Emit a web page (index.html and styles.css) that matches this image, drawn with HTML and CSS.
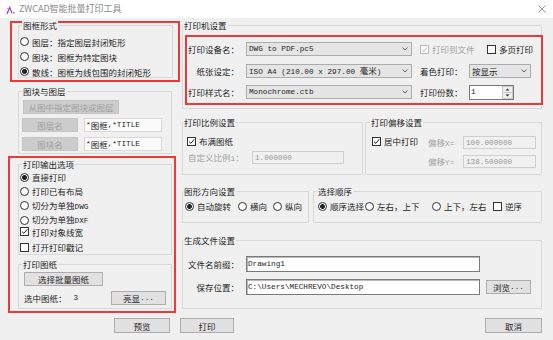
FILE: index.html
```html
<!DOCTYPE html>
<html lang="zh-CN">
<head>
<meta charset="utf-8">
<title>ZWCAD智能批量打印工具</title>
<link rel="stylesheet" href="styles.css">
</head>
<body>
<div class="titlebar">
  <svg class="logo" viewBox="0 0 10 10"><path d="M1 9 L4.2 1.5 L6.6 8" fill="none" stroke="#a33fc2" stroke-width="1.4"/><circle cx="8.6" cy="7.6" r="0.9" fill="#a33fc2"/><circle cx="2" cy="3" r="0.8" fill="#c07ad6"/></svg>
  <span class="title">ZWCAD智能批量打印工具</span>
  <svg class="close" viewBox="0 0 8 8"><path d="M0.5 0.5 L7.5 7.5 M7.5 0.5 L0.5 7.5" stroke="#8a8a8a" stroke-width="0.9"/></svg>
</div>

<div class="main">
  <div class="left">
    <div class="red red1">
      <div class="grp g1">
        <span class="lg">图框形式</span>
        <div class="opts3">
          <div class="it"><span class="rd"></span><span>图层：指定图层封闭矩形</span></div>
          <div class="it"><span class="rd"></span><span>图块：图框为特定图块</span></div>
          <div class="it"><span class="rd on"></span><span>散线：图框为线包围的封闭矩形</span></div>
        </div>
      </div>
    </div>

    <div class="grp g2">
      <span class="lg">图块与图层</span>
      <div class="btn dis b-pick">从图中指定图块或图层</div>
      <div class="nrow">
        <div class="btn dis b-name">图层名</div>
        <div class="tb tb-dis"><span class="m">*</span>图框<span class="m">,*TITLE</span></div>
      </div>
      <div class="nrow nrow2">
        <div class="btn dis b-name">图块名</div>
        <div class="tb tb-dis"><span class="m">*</span>图框<span class="m">,*TITLE</span></div>
      </div>
    </div>

    <div class="red red2">
      <div class="grp g3">
        <span class="lg">打印输出选项</span>
        <div class="opts6">
          <div class="it"><span class="rd on"></span><span>直接打印</span></div>
          <div class="it"><span class="rd"></span><span>打印已有布局</span></div>
          <div class="it"><span class="rd"></span><span>切分为单独<span class="m">DWG</span></span></div>
          <div class="it"><span class="rd"></span><span>切分为单独<span class="m">DXF</span></span></div>
          <div class="it"><span class="cb"><svg viewBox="0 0 7 7"><path d="M1 3.6 L2.9 5.4 L6.2 1.3" fill="none" stroke="#222" stroke-width="1"/></svg></span><span>打印对象线宽</span></div>
          <div class="it"><span class="cb"></span><span>打开打印戳记</span></div>
        </div>
      </div>
      <div class="grp g4">
        <span class="lg">打印图纸</span>
        <div class="btn b-batch">选择批量图纸</div>
        <div class="selrow">
          <span>选中图纸：</span><span class="m cnt">3</span>
          <div class="btn b-hl">亮显<span class="m">...</span></div>
        </div>
      </div>
    </div>
  </div>

  <div class="right">
    <div class="grp gP">
      <span class="lg">打印机设置</span>
      <div class="red red3">
        <div class="prow">
          <span class="plab">打印设备名：</span>
          <div class="sel sel-w"><span class="m">DWG to PDF.pc5</span><svg class="chev" viewBox="0 0 6 4"><path d="M0.5 0.5 L3 3 L5.5 0.5" fill="none" stroke="#555" stroke-width="0.9"/></svg></div>
          <div class="it it-file"><span class="cb cb-dis"><svg viewBox="0 0 7 7"><path d="M1 3.6 L2.9 5.4 L6.2 1.3" fill="none" stroke="#b5b5b5" stroke-width="1"/></svg></span><span class="gray">打印到文件</span></div>
          <div class="it it-multi"><span class="cb"></span><span>多页打印</span></div>
        </div>
        <div class="prow">
          <span class="plab">纸张设定：</span>
          <div class="sel sel-w"><span><span class="m">ISO A4 (210.00 x 297.00 </span>毫米<span class="m">)</span></span><svg class="chev" viewBox="0 0 6 4"><path d="M0.5 0.5 L3 3 L5.5 0.5" fill="none" stroke="#555" stroke-width="0.9"/></svg></div>
          <span class="rlab">着色打印：</span>
          <div class="sel sel-s"><span>按显示</span><svg class="chev" viewBox="0 0 6 4"><path d="M0.5 0.5 L3 3 L5.5 0.5" fill="none" stroke="#555" stroke-width="0.9"/></svg></div>
        </div>
        <div class="prow">
          <span class="plab">打印样式名：</span>
          <div class="sel sel-w"><span class="m">Monochrome.ctb</span><svg class="chev" viewBox="0 0 6 4"><path d="M0.5 0.5 L3 3 L5.5 0.5" fill="none" stroke="#555" stroke-width="0.9"/></svg></div>
          <span class="rlab">打印份数：</span>
          <div class="spin"><span class="m">1</span><svg class="spb" viewBox="0 0 11 13"><rect x="0.5" y="0.5" width="10" height="12" fill="#f0f0f0" stroke="#c9c9c9"/><line x1="0.5" y1="6.5" x2="10.5" y2="6.5" stroke="#c9c9c9"/><path d="M3.5 4.5 L5.5 2.5 L7.5 4.5 Z M3.5 8.5 L5.5 10.5 L7.5 8.5 Z" fill="#333"/></svg></div>
        </div>
      </div>
    </div>

    <div class="row2">
      <div class="grp gS">
        <span class="lg">打印比例设置</span>
        <div class="it s-fill"><span class="cb"><svg viewBox="0 0 7 7"><path d="M1 3.6 L2.9 5.4 L6.2 1.3" fill="none" stroke="#222" stroke-width="1"/></svg></span><span>布满图纸</span></div>
        <div class="s-row">
          <span class="gray s-lab">自定义比例<span class="m">1</span>：</span>
          <div class="tb tb-off s-in"><span class="m">1.000000</span></div>
        </div>
      </div>
      <div class="grp gO">
        <span class="lg">打印偏移设置</span>
        <div class="o-body">
          <div class="it o-cb"><span class="cb"><svg viewBox="0 0 7 7"><path d="M1 3.6 L2.9 5.4 L6.2 1.3" fill="none" stroke="#222" stroke-width="1"/></svg></span><span>居中打印</span></div>
          <div class="o-grid">
            <span class="gray o-lab">偏移<span class="m">X=</span></span>
            <div class="tb tb-off o-in"><span class="m">100.000000</span></div>
            <span class="gray o-lab">偏移<span class="m">Y=</span></span>
            <div class="tb tb-off o-in"><span class="m">138.500000</span></div>
          </div>
        </div>
      </div>
    </div>

    <div class="row3">
      <div class="grp gD">
        <span class="lg">图形方向设置</span>
        <div class="rrow d-row">
          <div class="it"><span class="rd on"></span><span>自动旋转</span></div>
          <div class="it d-2"><span class="rd"></span><span>横向</span></div>
          <div class="it d-3"><span class="rd"></span><span>纵向</span></div>
        </div>
      </div>
      <div class="grp gQ">
        <span class="lg">选择顺序</span>
        <div class="rrow q-row">
          <div class="it"><span class="rd on"></span><span>顺序选择</span></div>
          <div class="it q-2"><span class="rd"></span><span>左右，上下</span></div>
          <div class="it q-3"><span class="rd"></span><span>上下，左右</span></div>
          <div class="it q-4"><span class="cb"></span><span>逆序</span></div>
        </div>
      </div>
    </div>

    <div class="grp gF">
      <span class="lg">生成文件设置</span>
      <div class="frow f1">
        <span class="plab">文件名前缀：</span>
        <div class="tb tb-in f-in"><span class="m">Drawing1</span></div>
      </div>
      <div class="frow f2">
        <span class="plab">保存位置：</span>
        <div class="tb tb-in f-in"><span class="m">C:\Users\MECHREVO\Desktop</span></div>
        <div class="btn b-browse">浏览<span class="m">...</span></div>
      </div>
    </div>
  </div>
</div>

<div class="foot">
  <div class="btn b-prev">预览</div>
  <div class="btn b-print">打印</div>
  <div class="btn b-cancel">取消</div>
</div>
</body>
</html>
```

FILE: styles.css
```css
* { box-sizing: border-box; margin: 0; padding: 0; }
html, body { width: 553px; height: 340px; overflow: hidden; }
body {
  background: #f0f0f0;
  font-family: "Noto Sans CJK SC", "Noto Sans", sans-serif;
  font-size: 8.5px;
  line-height: 10px;
  color: #1e1e1e;
}
.m { font-family: "Liberation Mono", monospace; font-size: 7.7px; }
.gray { color: #a3a3a3; }

/* title bar */
.titlebar { height: 18px; background: #fff; display: flex; align-items: center; padding: 0 7px 0 6px; }
.logo { width: 9px; height: 9px; margin-top: 2px; }
.title { margin-left: 4px; color: #8c8c8c; font-size: 9px; }
.close { margin-left: auto; width: 8px; height: 8px; }

/* layout */
.main { display: flex; height: 300px; }
.left { width: 172px; margin-left: 8px; display: flex; flex-direction: column; }
.right { width: 360px; margin-left: 2px; display: flex; flex-direction: column; }

.red { border: 2px solid #ec3a3a; }
.grp { border: 1px solid #d9d9d9; }
.lg { display: block; width: max-content; height: 10px; margin-top: -6px; padding: 0 1px; background: #f0f0f0; }

/* common controls */
.it { display: flex; align-items: center; white-space: nowrap; }
.rd {
  width: 9px; height: 9px; border: 1px solid #333; border-radius: 50%;
  background: #fff; margin-right: 3px; flex: none;
}
.rd.on { background: radial-gradient(circle, #222 0 2.1px, #fff 2.7px); }
.cb {
  width: 9px; height: 9px; border: 1px solid #333; background: #fff;
  margin-right: 3px; flex: none; display: flex; align-items: center; justify-content: center;
}
.cb svg { width: 7px; height: 7px; }
.cb-dis { border-color: #bdbdbd; }

.btn {
  background: #e1e1e1; border: 1px solid #adadad; height: 14px;
  display: flex; align-items: center; justify-content: center; white-space: nowrap;
}
.btn.dis { background: #cccccc; border-color: #c4c4c4; color: #a0a0a0; }

.tb { height: 14px; display: flex; align-items: center; white-space: nowrap; overflow: hidden; }
.tb-dis { background: #fbfbfb; border: 1px solid #d9d9d9; padding-left: 1px; }
.tb-off { background: #f0f0f0; border: 1px solid #cfcfcf; color: #9a9a9a; padding-left: 2px; height: 13px; }
.tb-in { background: #fff; border: 1px solid #7a7a7a; box-shadow: inset 1px 1px 0 #b9b9b9; padding-left: 1px; height: 16px; }

.sel {
  height: 14px; background: #e5e5e5; border: 1px solid #acacac;
  display: flex; align-items: center; justify-content: space-between;
  padding: 0 3px 0 2px; white-space: nowrap;
}
.chev { width: 6px; height: 4px; flex: none; }

/* left: group 1 */
.red1 { margin: 3px 0 0 2px; width: 170px; height: 61px; }
.g1 { margin: 2px 0 0 6px; width: 155px; height: 53px; }
.g1 .lg, .g2 .lg, .g3 .lg, .g4 .lg { margin-left: 3px; }
.opts3 { margin-top: 4px; padding-left: 1px; display: grid; grid-template-rows: 15px 15px 15px; }

/* left: group 2 */
.g2 { margin: 9px 0 0 10px; width: 154px; height: 63px; }
.b-pick { margin: 4px 0 0 4px; width: 96px; }
.nrow { display: flex; margin: 4px 0 0 3px; }
.nrow2 { margin-top: 5px; }
.b-name { width: 56px; }
.nrow .tb { margin-left: 6px; width: 78px; }

/* left: red 2 */
.red2 { margin-top: 2px; width: 168px; height: 157px; }
.g3 { margin: 6px 0 0 8px; width: 154px; height: 91px; }
.opts6 { margin-top: 1px; padding-left: 1px; display: grid; grid-template-rows: 14px 14.5px 14.5px 14px 9px 22px; }
.g4 { margin: 9px 0 0 8px; width: 154px; height: 45px; }
.b-batch { margin: 3px 0 0 5px; width: 79px; }
.selrow { display: flex; align-items: center; height: 14px; margin-top: 5px; padding: 0 5px 0 5px; }
.cnt { margin-left: 7px; }
.b-hl { margin-left: auto; width: 55px; }

/* right: printer */
.gP { margin-top: 7px; height: 84px; }
.red3 { margin: 5px 0 0 2px; width: 358px; height: 70px; padding-top: 5px; display: flex; flex-direction: column; gap: 7.5px; }
.prow { display: flex; align-items: center; height: 14px; }
.plab { width: 52px; text-align: right; white-space: nowrap; }
.sel-w { margin-left: 7px; width: 166px; }
.it-file { margin-left: 8px; }
.it-multi { margin-left: 12.5px; }
.rlab { margin-left: 8px; width: 42.5px; white-space: nowrap; }
.sel-s { margin-left: 6.5px; width: 62px; }
.spin {
  margin-left: 6.5px; width: 45px; height: 15px; background: #fff;
  border: 1px solid #7a7a7a; display: flex; align-items: center; justify-content: space-between; padding-left: 1px;
}
.spb { width: 11px; height: 13px; }

/* scale + offset */
.row2 { display: flex; margin-top: 13px; height: 53px; }
.gS { width: 181px; }
.gO { width: 177px; margin-left: 2px; }
.gO .lg { margin-left: 4px; }
.s-fill { margin-top: 9px; padding-left: 4px; height: 10px; }
.s-row { display: flex; align-items: center; margin-top: 5px; padding-left: 5px; height: 13px; }
.s-lab { width: 64px; white-space: nowrap; }
.s-in { width: 92px; }
.o-body { display: flex; margin-top: 9px; }
.o-cb { margin-left: 6px; height: 10px; width: 46px; }
.o-grid { margin-left: 10px; display: grid; grid-template-columns: 35px 73px; grid-template-rows: 13px 13px; row-gap: 6px; align-items: center; }
.o-lab { white-space: nowrap; }

/* orientation + order */
.row3 { display: flex; margin-top: 16px; height: 32px; }
.gD { width: 127px; }
.gQ { width: 229px; margin-left: 4px; }
.gQ .lg { margin-left: 3px; }
.rrow { display: flex; margin-top: 5px; height: 10px; }
.d-row { padding-left: 2px; }
.d-2 { margin-left: 7px; }
.d-3 { margin-left: 6px; }
.q-row { padding-left: 4px; }
.q-2 { margin-left: 1px; }
.q-3 { margin-left: 12.5px; }
.q-4 { margin-left: 6.5px; }

/* output file */
.gF { margin-top: 17px; height: 69px; }
.frow { display: flex; align-items: center; height: 16px; padding-left: 4px; }
.f1 { margin-top: 11px; }
.f2 { margin-top: 7px; }
.f-in { margin-left: 7px; width: 234px; }
.b-browse { margin-left: 6px; width: 45px; }

/* footer */
.foot { display: flex; height: 15px; padding: 0 11px 0 114px; }
.foot .btn { height: 15px; }
.b-prev { width: 56px; }
.b-print { width: 54px; margin-left: 10px; }
.b-cancel { width: 57px; margin-left: auto; }
```
